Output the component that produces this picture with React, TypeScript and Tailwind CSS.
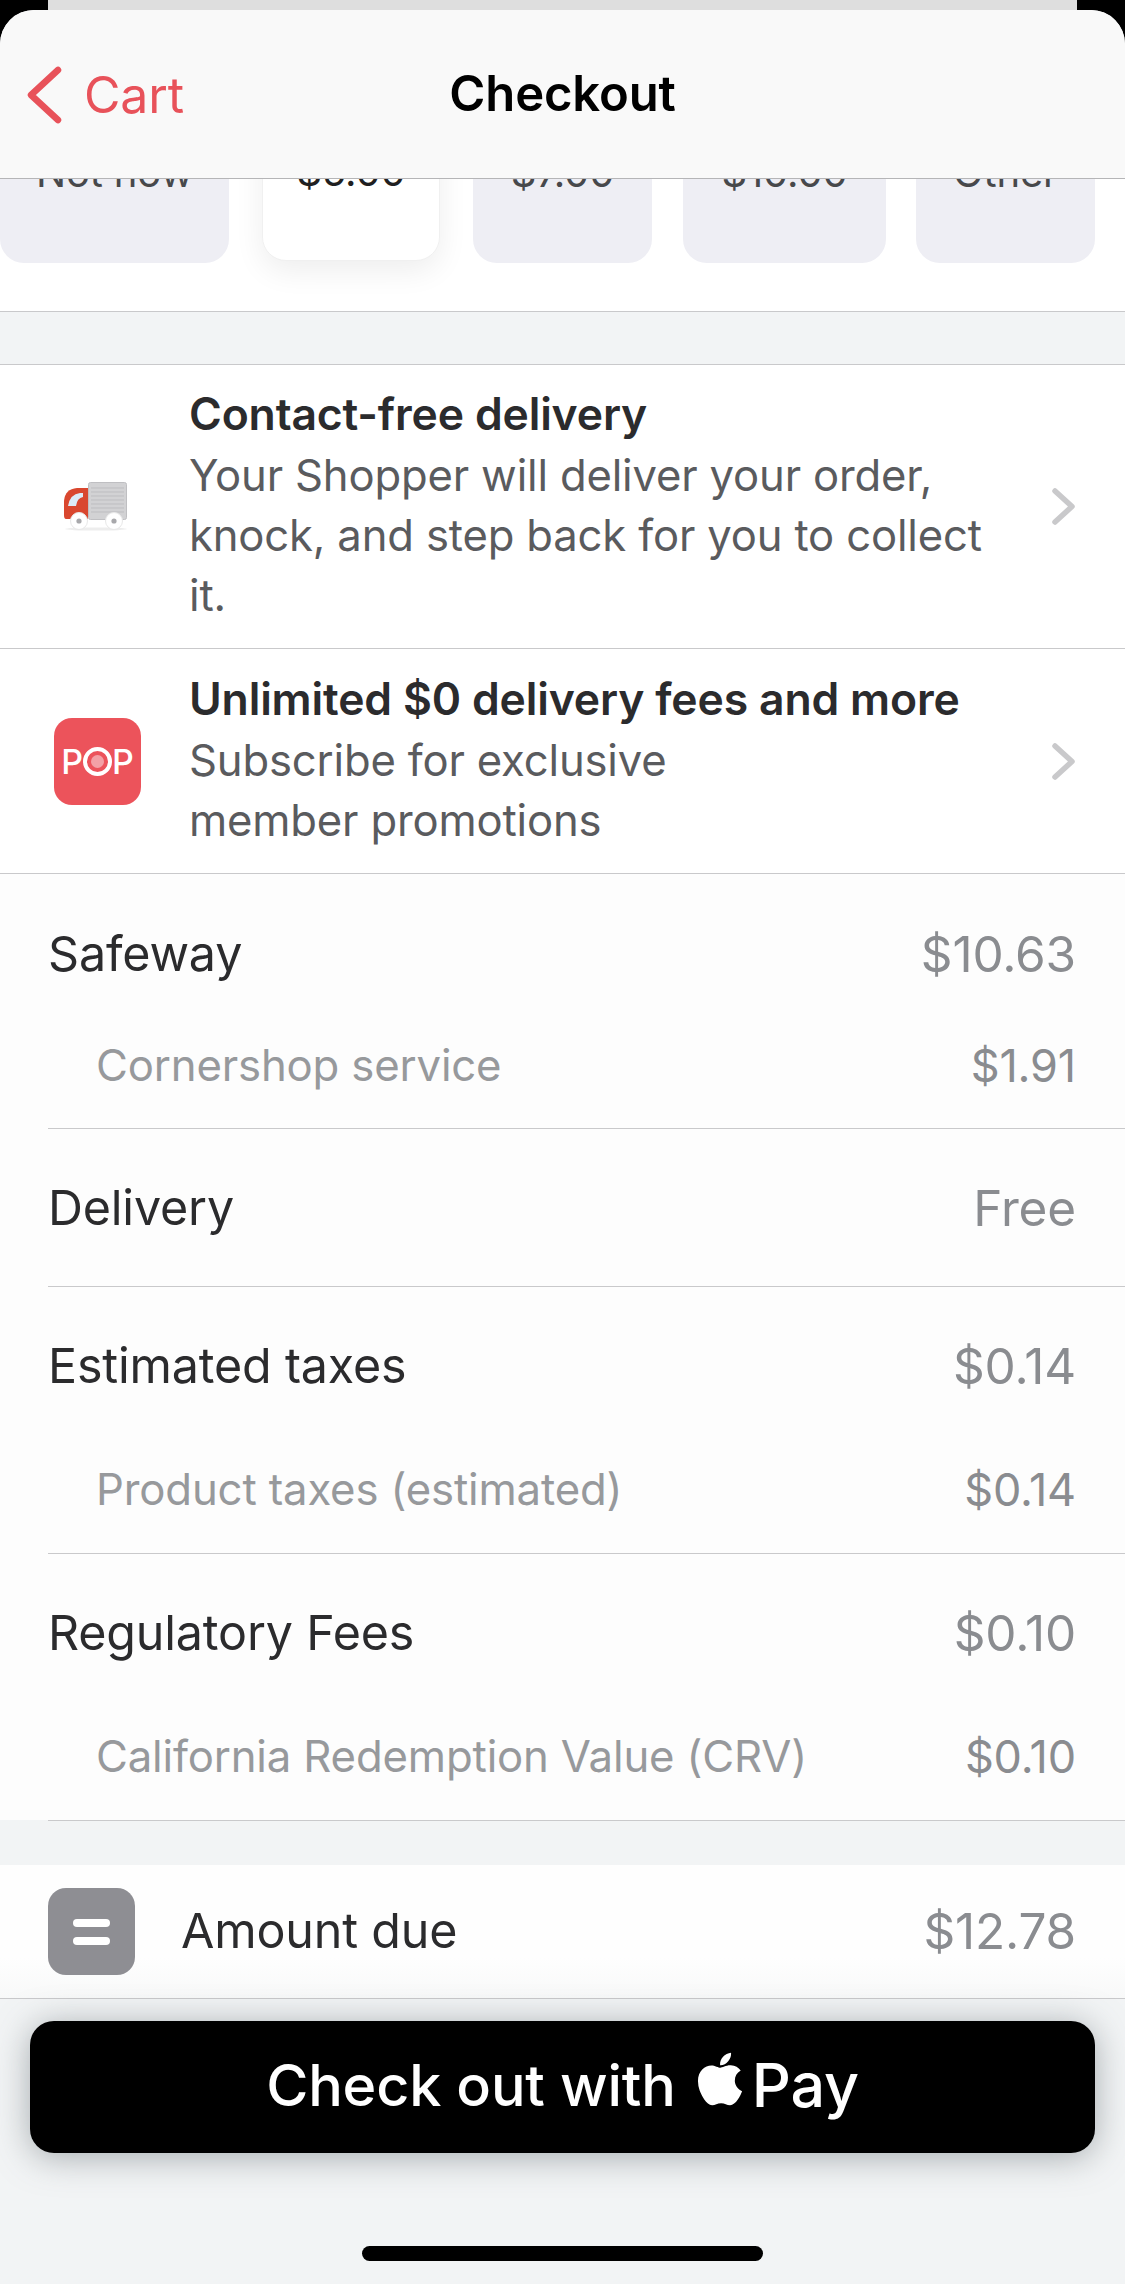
import type { ReactNode } from "react";
import { FaApple } from "react-icons/fa";

const font = { fontFamily: "Inter, sans-serif" };

const tips = [
  { label: "Not now", w: "w-[229px]" },
  { label: "$5.00", w: "w-[178px] ml-[33px]", active: true },
  { label: "$7.00", w: "w-[179px] ml-[33px]" },
  { label: "$10.00", w: "w-[203px] ml-[31px]" },
  { label: "Other", w: "w-[179px] ml-[30px]" },
];

function Truck() {
  return (
    <svg width="64" height="49" viewBox="0 0 64 49" className="block">
      <ellipse cx="32" cy="47" rx="31" ry="1.6" fill="#ededed" />
      <rect x="24.5" y="0.5" width="38" height="37" rx="2" fill="#d2d2d4" stroke="#bfbfc2" />
      <path d="M27 6h33M27 10h33M27 14h33M27 18h33M27 22h33M27 26h33M27 30h33" stroke="#bdbdc0" strokeWidth="1" />
      <path d="M0 33V19Q1 7 13 6H24V37H2Q0 37 0 33Z" fill="#d9472f" />
      <path d="M4 24Q6 12 16 11H19V15Q13 16 12 24Z" fill="#dcebf7" />
      <circle cx="15" cy="39" r="8.5" fill="#ffffff" stroke="#e8e8e8" />
      <circle cx="15" cy="39" r="2.6" fill="#a8a8ab" />
      <circle cx="50" cy="39" r="8.5" fill="#ffffff" stroke="#e8e8e8" />
      <circle cx="50" cy="39" r="2.6" fill="#a8a8ab" />
    </svg>
  );
}

function Chevron() {
  return (
    <svg width="23" height="37" viewBox="0 0 23 37" className="shrink-0">
      <path d="M3 3L20 18.5L3 34" fill="none" stroke="#c9c9cb" strokeWidth="5.5" strokeLinecap="round" strokeLinejoin="round" />
    </svg>
  );
}

function InfoRow({ icon, title, lines, h, inset }: { icon: ReactNode; title: string; lines: string[]; h: string; inset: string }) {
  return (
    <div className={`flex items-center bg-white border-b border-[#c9c9cb] pr-[50px] ${h}`}>
      <div className={`w-[189px] shrink-0 ${inset}`}>{icon}</div>
      <div className="flex-1">
        <div className="text-[44.5px] leading-[60px] font-semibold text-[#2b2b2d] -mt-[3px] mb-[2px]">{title}</div>
        {lines.map((l) => (
          <div key={l} className="text-[43.6px] leading-[60px] text-[#5a5b5e]">{l}</div>
        ))}
      </div>
      <Chevron />
    </div>
  );
}

function FeeRow({ label, value, h }: { label: string; value: string; h: string }) {
  return (
    <div className={`flex items-center justify-between ${h}`}>
      <span className="text-[48.4px] text-[#2b2b2d]">{label}</span>
      <span className="text-[49.5px] text-[#8a8c90]">{value}</span>
    </div>
  );
}

function SubRow({ label, value, h }: { label: string; value: string; h: string }) {
  return (
    <div className={`flex items-center justify-between pl-[48px] ${h}`}>
      <span className="text-[43.7px] text-[#97999c]">{label}</span>
      <span className="text-[45px] text-[#8a8c90]">{value}</span>
    </div>
  );
}

export default function App() {
  return (
    <div style={font} className="w-[1125px] h-[2284px] bg-black overflow-hidden tracking-[-0.01em]">
      <div className="mx-[48px] h-[10px] bg-[#dedede]" />
      <div className="bg-[#f2f4f5] h-[2274px] rounded-t-[34px] overflow-hidden">
        <header className="relative z-10 h-[169px] bg-[#f9f9f9] border-b border-[#b5b5b7] flex items-center justify-center">
          <div className="absolute left-[26px] top-[56px] flex items-center gap-[22px]">
            <svg width="36" height="58" viewBox="0 0 36 58">
              <path d="M32 4L5 29L32 54" fill="none" stroke="#e8525a" strokeWidth="6.5" strokeLinecap="round" strokeLinejoin="round" />
            </svg>
            <span className="text-[50px] text-[#e8525a] leading-none">Cart</span>
          </div>
          <h1 className="text-[49px] font-semibold text-black leading-none pb-[2px]">Checkout</h1>
        </header>

        <div className="bg-white h-[133px] border-b border-[#c9c9cb] flex items-start">
          <div className="flex -mt-[96px]">
            {tips.map((t) => (
              <div
                key={t.label}
                className={`${t.w} shrink-0 rounded-[24px] flex items-center justify-center text-[40px] ${
                  t.active
                    ? "h-[178px] bg-white text-[#1f1f21] border border-[#f0f0f0] shadow-[0_10px_30px_rgba(0,0,0,0.07)]"
                    : "h-[180px] bg-[#eeeef4] text-[#47484b]"
                }`}
              >
                {t.label}
              </div>
            ))}
          </div>
        </div>

        <div className="h-[53px] border-b border-[#c9c9cb]" />

        <InfoRow
          h="h-[284px]"
          inset="pl-[64px]"
          icon={<Truck />}
          title="Contact-free delivery"
          lines={["Your Shopper will deliver your order,", "knock, and step back for you to collect", "it."]}
        />
        <InfoRow
          h="h-[225px]"
          inset="pl-[54px]"
          icon={
            <div className="w-[87px] h-[87px] rounded-[18px] bg-[#ec535b] flex items-center justify-center text-white text-[34px] font-medium">
              P
              <span className="w-[29px] h-[29px] rounded-full border-[4px] border-white flex items-center justify-center">
                <span className="w-[13px] h-[13px] rounded-full bg-[#f3a1a6]" />
              </span>
              P
            </div>
          }
          title="Unlimited $0 delivery fees and more"
          lines={["Subscribe for exclusive", "member promotions"]}
        />

        <section className="bg-[#fdfdfd] pl-[48px]">
          <div className="pr-[49px]">
            <FeeRow h="h-[147px] pt-[14px]" label="Safeway" value="$10.63" />
            <SubRow h="h-[107px] pb-[18px]" label="Cornershop service" value="$1.91" />
          </div>
          <div className="border-t border-[#c9c9cb] pr-[49px]">
            <FeeRow h="h-[157px] pt-[2px]" label="Delivery" value="Free" />
          </div>
          <div className="border-t border-[#c9c9cb] pr-[49px]">
            <FeeRow h="h-[153px] pt-[6px]" label="Estimated taxes" value="$0.14" />
            <SubRow h="h-[113px] pb-[13px]" label="Product taxes (estimated)" value="$0.14" />
          </div>
          <div className="border-t border-[#c9c9cb] pr-[49px]">
            <FeeRow h="h-[153px] pt-[6px]" label="Regulatory Fees" value="$0.10" />
            <SubRow h="h-[113px] pb-[13px]" label="California Redemption Value (CRV)" value="$0.10" />
          </div>
        </section>
        <div className="h-[45px] border-t border-[#c9c9cb] ml-[48px]" />

        <div className="h-[134px] bg-gradient-to-b from-[#fefefe] from-70% to-[#f8f9f9] border-b border-[#c9c9cb] flex items-center pl-[48px] pr-[49px]">
          <div className="w-[87px] h-[87px] rounded-[18px] bg-[#8e8e93] flex flex-col items-center justify-center gap-[10px]">
            <span className="w-[37px] h-[8px] rounded-full bg-white" />
            <span className="w-[37px] h-[8px] rounded-full bg-white" />
          </div>
          <span className="ml-[46px] flex-1 text-[48.4px] text-[#2b2b2d]">Amount due</span>
          <span className="text-[49.5px] text-[#8a8c90]">$12.78</span>
        </div>

        <div className="px-[30px] pt-[22px]">
          <button className="w-[1065px] h-[132px] pb-[3px] rounded-[24px] bg-black text-white text-[57.5px] font-medium flex items-center justify-center shadow-[0_4px_34px_rgba(90,100,105,0.5)]">
            Check out with
            <FaApple className="ml-[14px] mr-[2px] text-[60px] -mt-[14px]" />
            <span className="text-[61px]">Pay</span>
          </button>
        </div>

        <div className="mt-[93px] mx-auto w-[401px] h-[15px] rounded-full bg-black" />
      </div>
    </div>
  );
}
